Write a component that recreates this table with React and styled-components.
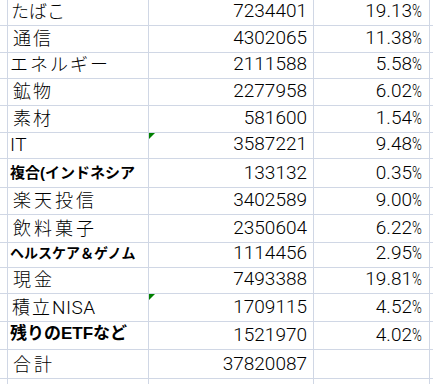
import React from 'react';
import styled, { createGlobalStyle } from 'styled-components';

const GlobalStyle = createGlobalStyle`
  html, body {
    margin: 0;
    padding: 0;
    background: #ffffff;
  }
  * {
    box-sizing: border-box;
  }
`;

const gridColor = '#d0d7e5';

const Sheet = styled.div`
  width: 433px;
  height: 384px;
  overflow: hidden;
  background: #ffffff;
  font-family: 'Liberation Sans', 'Noto Sans CJK JP', sans-serif;
  color: #000000;
`;

const Row = styled.div`
  display: flex;
  height: ${({ h }) => h}px;
  border-bottom: 1px solid ${gridColor};
`;

const Cell = styled.div`
  position: relative;
  display: flex;
  align-items: flex-end;
  height: 100%;
  border-right: 1px solid ${gridColor};
  white-space: nowrap;
  overflow: visible;
`;

const Gutter = styled(Cell)`
  width: 8px;
  flex: none;
`;

const NameCell = styled(Cell)`
  width: 141px;
  flex: none;
  padding-left: ${({ indent }) => indent}px;
  padding-bottom: ${({ bold }) => (bold ? '5px' : '2px')};
  font-size: ${({ size }) => size}px;
  letter-spacing: ${({ spacing }) => spacing}px;
  font-weight: ${({ weight }) => weight};
`;

const Latin = styled.span`
  font-family: 'Roboto', 'Liberation Sans', sans-serif;
  font-weight: 300;
  letter-spacing: 0.5px;
  font-size: 19px;
`;

const NumCell = styled(Cell)`
  width: ${({ w }) => w}px;
  flex: none;
  justify-content: flex-end;
  padding: 0 6px 3px 0;
  font-family: 'Roboto', 'Liberation Sans', sans-serif;
  font-weight: 300;
  font-size: 19px;
`;

const Percent = styled.span`
  display: inline-block;
  width: 11px;
  transform: scaleX(0.7);
  transform-origin: left bottom;
`;

const Tail = styled.div`
  flex: 1;
`;

const ErrorMark = styled.span`
  position: absolute;
  top: 0;
  left: 0;
  width: 0;
  height: 0;
  border-top: 6px solid #008000;
  border-right: 6px solid transparent;
`;

const rows = [
  { name: 'たばこ', value: '7234401', pct: '19.13', h: 26, size: 18, indent: 3 },
  { name: '通信', value: '4302065', pct: '11.38', h: 27, size: 18, spacing: 2, indent: 5 },
  { name: 'エネルギー', value: '2111588', pct: '5.58', h: 26, size: 18, spacing: 2, indent: 2 },
  { name: '鉱物', value: '2277958', pct: '6.02', h: 27, size: 18, spacing: 2, indent: 5 },
  { name: '素材', value: '581600', pct: '1.54', h: 27, size: 18, spacing: 2, indent: 5 },
  { name: '', latin: 'IT', value: '3587221', pct: '9.48', h: 26, size: 19, indent: 2, mark: true },
  { name: '複合(インドネシア', value: '133132', pct: '0.35', h: 29, size: 15, indent: 2, bold: true },
  { name: '楽天投信', value: '3402589', pct: '9.00', h: 27, size: 18, spacing: 3, indent: 5 },
  { name: '飲料菓子', value: '2350604', pct: '6.22', h: 28, size: 18, spacing: 3, indent: 5 },
  { name: 'ヘルスケア＆ゲノム', value: '1114456', pct: '2.95', h: 25, size: 14, indent: 2, bold: true },
  { name: '現金', value: '7493388', pct: '19.81', h: 26, size: 18, spacing: 3, indent: 5 },
  { name: '積立', latin: 'NISA', value: '1709115', pct: '4.52', h: 28, size: 18, spacing: 2, indent: 4, mark: true },
  { name: '残りのETFなど', value: '1521970', pct: '4.02', h: 28, size: 17, indent: 2, bold: true },
  { name: '合計', value: '37820087', pct: '', h: 29, size: 18, spacing: 3, indent: 5 },
];

const App = () => {
  return (
    <Sheet>
      <GlobalStyle />
      {rows.map((row, i) => (
        <Row h={row.h} key={i}>
          <Gutter />
          <NameCell
            weight={row.bold ? 700 : 300}
            bold={row.bold}
            size={row.size}
            spacing={row.spacing || 0}
            indent={row.indent}
          >
            {row.name}
            {row.latin && <Latin>{row.latin}</Latin>}
          </NameCell>
          <NumCell w={165}>
            {row.mark && <ErrorMark />}
            {row.value}
          </NumCell>
          <NumCell w={116}>
            {row.pct}
            {row.pct && <Percent>%</Percent>}
          </NumCell>
          <Tail />
        </Row>
      ))}
      <Row h={10}>
        <Gutter />
        <NameCell size={18} indent={3} weight={400} />
        <NumCell w={165} />
        <NumCell w={116} />
        <Tail />
      </Row>
    </Sheet>
  );
};

export default App;
